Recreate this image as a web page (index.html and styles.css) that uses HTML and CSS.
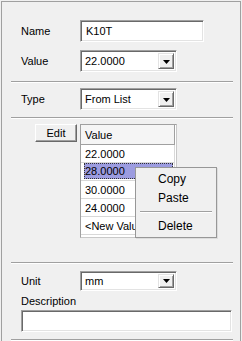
FILE: index.html
```html
<!DOCTYPE html>
<html>
<head>
<meta charset="utf-8">
<link rel="stylesheet" href="styles.css">
</head>
<body>
<div class="panel">
  <div class="field-row first">
    <span class="label">Name</span>
    <div class="textbox name-box">K10T</div>
  </div>
  <div class="field-row gap8">
    <span class="label">Value</span>
    <div class="combo"><span class="combo-text">22.0000</span><span class="drop"><svg width="7" height="4" viewBox="0 0 7 4"><polygon points="0,0 7,0 3.5,4" fill="#000"/></svg></span></div>
  </div>
  <div class="sep s1"></div>
  <div class="field-row">
    <span class="label">Type</span>
    <div class="combo"><span class="combo-text">From List</span><span class="drop"><svg width="7" height="4" viewBox="0 0 7 4"><polygon points="0,0 7,0 3.5,4" fill="#000"/></svg></span></div>
  </div>
  <div class="sep s2"></div>
  <div class="list-section">
    <div class="btn">Edit</div>
    <div class="grid">
      <div class="grid-head">Value</div>
      <div class="grid-row">22.0000</div>
      <div class="grid-row selected"><span class="focus">28.0000</span></div>
      <div class="grid-row">30.0000</div>
      <div class="grid-row">24.0000</div>
      <div class="grid-row">&lt;New Value&gt;</div>
    </div>
  </div>
  <div class="sep s3"></div>
  <div class="field-row unit-row">
    <span class="label">Unit</span>
    <div class="combo short"><span class="combo-text">mm</span><span class="drop"><svg width="7" height="4" viewBox="0 0 7 4"><polygon points="0,0 7,0 3.5,4" fill="#000"/></svg></span></div>
  </div>
  <div class="desc-label">Description</div>
  <div class="textbox desc-box"></div>
  <div class="sep s4"></div>

  <div class="menu">
    <div class="menu-item">Copy</div>
    <div class="menu-item">Paste</div>
    <div class="menu-sep"></div>
    <div class="menu-item">Delete</div>
  </div>
</div>
</body>
</html>
```

FILE: styles.css
```css
html, body {
  margin: 0;
  padding: 0;
  background: #f0f0f0;
}
body {
  font-family: "Liberation Sans", Arial, sans-serif;
  font-size: 11px;
  color: #000;
  width: 242px;
  height: 341px;
  overflow: hidden;
}
.panel {
  position: relative;
  margin: 1px 1px 0 1px;
  border: 1px solid #a0a0a0;
  border-bottom: none;
  height: 340px;
  box-sizing: border-box;
}
.field-row {
  display: flex;
  align-items: center;
  height: 22px;
}
.field-row.first { margin-top: 18px; }
.field-row.gap8 { margin-top: 8px; }
.label {
  width: 78px;
  padding-left: 19px;
  box-sizing: border-box;
}
.textbox {
  box-sizing: border-box;
  background: #fff;
  border: 1px solid;
  border-color: #a0a0a0 #fff #fff #a0a0a0;
  box-shadow: inset 1px 1px 0 #696969, inset -1px -1px 0 #e3e3e3;
  padding-left: 5px;
  line-height: 20px;
}
.name-box {
  width: 124px;
  height: 22px;
}
.combo {
  box-sizing: border-box;
  width: 97px;
  height: 22px;
  background: #fff;
  border: 1px solid;
  border-color: #a0a0a0 #fff #fff #a0a0a0;
  box-shadow: inset 1px 1px 0 #696969, inset -1px -1px 0 #e3e3e3;
  display: flex;
  align-items: stretch;
  padding: 2px;
}
.combo.short { height: 20px; }
.combo-text {
  flex: 1;
  padding-left: 2px;
  display: flex;
  align-items: center;
}
.drop {
  width: 16px;
  box-sizing: border-box;
  background: #f0f0f0;
  border: 1px solid;
  border-color: #e3e3e3 #696969 #696969 #e3e3e3;
  box-shadow: inset 1px 1px 0 #fff, inset -1px -1px 0 #a0a0a0;
  display: flex;
  align-items: center;
  justify-content: center;
}
.drop svg { display: block; margin-top: 1px; }
.sep {
  height: 0;
  border-top: 1px solid #a0a0a0;
  border-bottom: 1px solid #fff;
  margin-left: 9px;
  margin-right: 7px;
}
.s1 { margin-top: 9px; margin-bottom: 5px; }
.s2 { margin-top: 7px; margin-bottom: 5px; }
.s3 { margin-top: 24px; margin-bottom: 7px; }
.s4 { margin-top: 7px; }
.list-section {
  display: flex;
  gap: 3px;
  height: 114px;
  padding-left: 33px;
}
.btn {
  width: 42px;
  height: 18px;
  box-sizing: border-box;
  border: 1px solid;
  border-color: #fff #696969 #696969 #fff;
  box-shadow: inset -1px -1px 0 #a0a0a0;
  background: #f0f0f0;
  display: flex;
  align-items: center;
  justify-content: center;
  padding-bottom: 1px;
}
.grid {
  width: 97px;
  box-sizing: border-box;
  background: #fff;
  border: 1px solid #a0a0a0;
  border-right-color: #c8c8c8;
  border-bottom-color: #c8c8c8;
  display: flex;
  flex-direction: column;
}
.grid-head {
  height: 19px;
  width: 93px;
  box-sizing: content-box;
  border-bottom: 1px solid #a0a0a0;
  border-right: 1px solid #a0a0a0;
  background: #f5f5f5;
  display: flex;
  align-items: center;
  padding-left: 4px;
  margin-right: 0;
}
.grid-row {
  height: 17px;
  border-bottom: 1px solid #d8d8d8;
  border-right: 1px solid #d8d8d8;
  width: 93px;
  display: flex;
  align-items: center;
  padding-left: 4px;
  white-space: nowrap;
  overflow: hidden;
}
.grid-head, .grid-row { box-sizing: border-box; width: 94px; }
.grid-head { height: 20px; }
.grid-row { height: 18px; }
.grid-row.selected {
  padding: 0 1px 1px 3px;
}
.grid-row.selected .focus {
  flex: 1;
  align-self: stretch;
  background: #9c9ce0;
  outline: 1px dotted #333;
  outline-offset: -1px;
  display: flex;
  align-items: center;
  padding-left: 1px;
}
.unit-row { height: 19px; }
.desc-label {
  margin-top: 5px;
  padding-left: 19px;
  line-height: 13px;
}
.desc-box {
  margin-top: 2px;
  margin-left: 19px;
  width: 211px;
  height: 22px;
}
.menu {
  position: absolute;
  left: 133px;
  top: 165px;
  width: 82px;
  height: 71px;
  box-sizing: border-box;
  background: #f0f0f0;
  border: 1px solid #979797;
  padding: 2px 2px;
  box-shadow: 1px 1px 0 rgba(0,0,0,0.08);
}
.menu-item {
  height: 19px;
  line-height: 19px;
  padding-left: 20px;
  font-size: 12px;
}
.menu-sep {
  height: 0;
  border-top: 1px solid #a0a0a0;
  border-bottom: 1px solid #fff;
  margin: 3px 2px 4px 2px;
}
```
